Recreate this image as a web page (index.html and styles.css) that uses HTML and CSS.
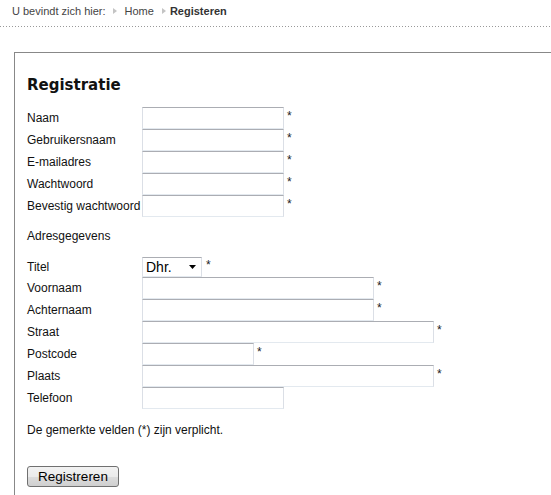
FILE: index.html
```html
<!DOCTYPE html>
<html>
<head>
    <title>Registeren</title>
    <link rel="stylesheet" href="styles.css">
</head>
<body>
    <div class="crumbs">
        <span class="crumb-intro">U bevindt zich hier:</span>
        <span class="crumb-sep sep-first"></span>
        <span class="crumb-link">Home</span>
        <span class="crumb-sep sep-second"></span>
        <span class="crumb-current">Registeren</span>
    </div>
    <div class="dots"></div>

    <div class="box">
        <h1 class="title">Registratie</h1>

        <div class="rows">
            <div class="row">
                <label for="naam">Naam</label>
                <input type="text" id="naam" class="text w-md">
                <span class="req">*</span>
            </div>
            <div class="row">
                <label for="gebruikersnaam">Gebruikersnaam</label>
                <input type="text" id="gebruikersnaam" class="text w-md">
                <span class="req">*</span>
            </div>
            <div class="row">
                <label for="email">E-mailadres</label>
                <input type="text" id="email" class="text w-md">
                <span class="req">*</span>
            </div>
            <div class="row">
                <label for="wachtwoord">Wachtwoord</label>
                <input type="password" id="wachtwoord" class="text w-md">
                <span class="req">*</span>
            </div>
            <div class="row">
                <label for="bevestig">Bevestig wachtwoord</label>
                <input type="password" id="bevestig" class="text w-md">
                <span class="req">*</span>
            </div>
        </div>

        <div class="section">Adresgegevens</div>

        <div class="row row-select">
            <label>Titel</label>
            <div class="select">
                <span>Dhr.</span>
                <svg width="7" height="4" viewBox="0 0 7 4"><path d="M0 0h7L3.5 4z" fill="#000"/></svg>
            </div>
            <span class="req">*</span>
        </div>

        <div class="rows">
            <div class="row">
                <label for="voornaam">Voornaam</label>
                <input type="text" id="voornaam" class="text w-lg">
                <span class="req">*</span>
            </div>
            <div class="row">
                <label for="achternaam">Achternaam</label>
                <input type="text" id="achternaam" class="text w-lg">
                <span class="req">*</span>
            </div>
            <div class="row">
                <label for="straat">Straat</label>
                <input type="text" id="straat" class="text w-xl">
                <span class="req">*</span>
            </div>
            <div class="row">
                <label for="postcode">Postcode</label>
                <input type="text" id="postcode" class="text w-sm">
                <span class="req">*</span>
            </div>
            <div class="row">
                <label for="plaats">Plaats</label>
                <input type="text" id="plaats" class="text w-xl">
                <span class="req">*</span>
            </div>
            <div class="row">
                <label for="telefoon">Telefoon</label>
                <input type="text" id="telefoon" class="text w-md">
            </div>
        </div>

        <p class="note">De gemerkte velden (*) zijn verplicht.</p>

        <button class="submit">Registreren</button>
    </div>
</body>
</html>
```

FILE: styles.css
```css
body {
    margin: 0;
    font-family: "Liberation Sans", Arial, sans-serif;
    font-size: 12px;
    color: #111;
    background: #fff;
}

/* Breadcrumb */
.crumbs {
    box-sizing: border-box;
    height: 26px;
    padding: 4px 0 0 12px;
    font-size: 11px;
    line-height: 14px;
    display: flex;
    align-items: flex-start;
}

.crumb-intro {
    color: #444;
}

.crumb-link {
    color: #444;
}

.crumb-current {
    color: #333;
    font-weight: bold;
}

.crumb-sep {
    width: 0;
    height: 0;
    margin-top: 4px;
    border-top: 3px solid transparent;
    border-bottom: 3px solid transparent;
    border-left: 4px solid #c4c4c4;
}

.sep-first {
    margin-left: 7px;
    margin-right: 8px;
}

.sep-second {
    margin-left: 8px;
    margin-right: 4px;
}

.dots {
    height: 1px;
    background: repeating-linear-gradient(to right, #999 0 1px, transparent 1px 3px);
}

/* Form box */
.box {
    margin: 25px 0 0 14px;
    border-top: 1px solid #888;
    border-left: 1px solid #888;
    padding: 22px 0 8px 12px;
}

.title {
    margin: 0 0 12px;
    font-family: "DejaVu Sans", Verdana, sans-serif;
    font-size: 15px;
    line-height: 20px;
    font-weight: bold;
    color: #111;
}

.row {
    display: flex;
    align-items: center;
    height: 22px;
}

.row label {
    width: 115px;
    flex-shrink: 0;
}

.text {
    box-sizing: border-box;
    height: 22px;
    margin: 0;
    padding: 0 3px;
    border: 1px solid;
    border-color: #abadb3 #dbdfe6 #e3e9ef #dbdfe6;
    background: #fff;
    font-family: inherit;
    font-size: 12px;
}

.w-sm { width: 112px; }
.w-md { width: 142px; }
.w-lg { width: 232px; }
.w-xl { width: 292px; }

.req {
    margin-left: 3px;
    margin-top: 1px;
    align-self: flex-start;
    line-height: 16px;
    color: #222;
}

.section {
    margin: 12px 0 14px;
    line-height: 14px;
}

.row-select {
    height: 20px;
}

.select {
    box-sizing: border-box;
    width: 60px;
    height: 20px;
    padding: 0 5px 0 3px;
    border: 1px solid;
    border-color: #abadb3 #dbdfe6 #e3e9ef #dbdfe6;
    display: flex;
    align-items: center;
    justify-content: space-between;
    font-size: 14px;
    color: #000;
}

.row-select .req {
    margin-left: 4px;
    margin-top: 0;
}

.note {
    margin: 14px 0 29px;
    line-height: 14px;
}

.submit {
    display: block;
    box-sizing: border-box;
    width: 92px;
    height: 21px;
    padding: 0;
    border: 1px solid #707070;
    border-radius: 3px;
    background: linear-gradient(#f2f2f2, #ebebeb 50%, #dddddd 50%, #cfcfcf);
    font-family: inherit;
    font-size: 13.5px;
    color: #000;
}
```
